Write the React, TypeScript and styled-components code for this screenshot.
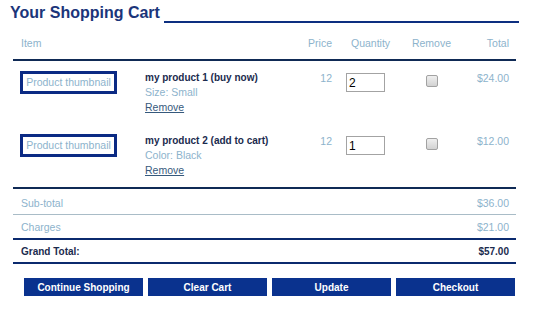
import React from "react";
import styled, { createGlobalStyle } from "styled-components";

const GlobalStyle = createGlobalStyle`
  html, body { margin: 0; padding: 0; background: #ffffff; }
  body { font-family: "Liberation Sans", Arial, sans-serif; }
`;

const NAVY = "#0b2a6e";
const LIGHT = "#8db3cc";
const DARK = "#1b2b4e";

const Page = styled.div`
  padding-top: 3px;
  width: 539px;
`;

const TitleRow = styled.div`
  display: flex;
  align-items: flex-start;
  height: 20px;
  padding-left: 10px;
  width: 509px;
`;

const Title = styled.h1`
  margin: 0;
  font-size: 16px;
  line-height: 20px;
  font-weight: bold;
  color: #1b357a;
  white-space: nowrap;
`;

const TitleRule = styled.div`
  flex: 1;
  height: 2px;
  margin-top: 18px;
  margin-left: 4px;
  background: #0d2f80;
`;

const Table = styled.div`
  margin: 13px 0 0 13px;
  width: 503px;
`;

const cols = "132px 145px 46px 68px 55px 57px";

const HeaderRow = styled.div`
  display: grid;
  grid-template-columns: ${cols};
  padding-bottom: 9px;
  border-bottom: 2px solid #0f2a55;
  font-size: 10.5px;
  line-height: 14px;
  color: ${LIGHT};
`;

const HeadCell = styled.div<{ $align?: string; $pl?: number; $pr?: number }>`
  text-align: ${(p) => p.$align || "left"};
  padding-left: ${(p) => p.$pl || 0}px;
  padding-right: ${(p) => p.$pr || 0}px;
`;

const Items = styled.div`
  border-bottom: 2px solid #0f2a55;
`;

const ItemRow = styled.div`
  display: grid;
  grid-template-columns: ${cols};
  align-items: start;
  box-sizing: border-box;
  height: 63px;
  padding-top: 10px;
  font-size: 10.5px;
  line-height: 14px;
  color: ${LIGHT};
`;

const Cell = styled.div<{ $align?: string; $pl?: number; $pr?: number }>`
  text-align: ${(p) => p.$align || "left"};
  padding-left: ${(p) => p.$pl || 0}px;
  padding-right: ${(p) => p.$pr || 0}px;
`;

const Thumb = styled.span`
  display: inline-block;
  box-sizing: border-box;
  width: 97px;
  height: 23px;
  border: 3px solid #0b2a84;
  font-size: 10.5px;
  line-height: 17px;
  text-align: center;
  color: ${LIGHT};
  white-space: nowrap;
`;

const Name = styled.div`
  font-size: 10px;
  font-weight: bold;
  color: ${DARK};
  white-space: nowrap;
`;

const Option = styled.div`
  color: ${LIGHT};
`;

const RemoveLink = styled.a`
  display: inline-block;
  margin-top: 1px;
  color: #36597c;
  text-decoration: underline;
  cursor: pointer;
`;

const QtyInput = styled.input`
  box-sizing: border-box;
  width: 39px;
  height: 19px;
  margin: 2px 0 0 0;
  padding: 0 2px;
  border: 1px solid #a3a3a3;
  font-family: "Liberation Sans", Arial, sans-serif;
  font-size: 12px;
  color: #000;
  outline: none;
`;

const CheckBox = styled.input`
  appearance: none;
  box-sizing: border-box;
  width: 12px;
  height: 12px;
  margin: 4px 0 0 0;
  border: 1px solid #a2a2a2;
  border-radius: 2px;
  background: linear-gradient(#efefef, #d2d2d2);
`;

const SumRow = styled.div<{ $pt: number; $pb: number; $border: string; $strong?: boolean }>`
  display: flex;
  justify-content: space-between;
  padding: ${(p) => p.$pt}px 7px ${(p) => p.$pb}px 8px;
  border-bottom: ${(p) => p.$border};
  font-size: ${(p) => (p.$strong ? "10px" : "10.5px")};
  font-weight: ${(p) => (p.$strong ? "bold" : "normal")};
  line-height: 14px;
  color: ${(p) => (p.$strong ? DARK : LIGHT)};
`;

const ButtonBar = styled.div`
  display: grid;
  grid-template-columns: repeat(4, 119px);
  gap: 5px;
  margin: 14px 0 0 24px;
`;

const Button = styled.button`
  height: 18px;
  padding: 0;
  border: none;
  background: #0a328e;
  color: #ffffff;
  font-family: "Liberation Sans", Arial, sans-serif;
  font-size: 10px;
  font-weight: bold;
  cursor: pointer;
`;

const items = [
  { name: "my product 1 (buy now)", option: "Size: Small", price: "12", qty: "2", total: "$24.00" },
  { name: "my product 2 (add to cart)", option: "Color: Black", price: "12", qty: "1", total: "$12.00" },
];

export default function App() {
  return (
    <Page>
      <GlobalStyle />
      <TitleRow>
        <Title>Your Shopping Cart</Title>
        <TitleRule />
      </TitleRow>
      <Table>
        <HeaderRow>
          <HeadCell $pl={8}>Item</HeadCell>
          <HeadCell />
          <HeadCell $align="right" $pr={4}>Price</HeadCell>
          <HeadCell $pl={15}>Quantity</HeadCell>
          <HeadCell $align="center">Remove</HeadCell>
          <HeadCell $align="right" $pr={7}>Total</HeadCell>
        </HeaderRow>
        <Items>
          {items.map((it) => (
            <ItemRow key={it.name}>
              <Cell $pl={7}>
                <Thumb>Product thumbnail</Thumb>
              </Cell>
              <Cell>
                <Name>{it.name}</Name>
                <Option>{it.option}</Option>
                <RemoveLink>Remove</RemoveLink>
              </Cell>
              <Cell $align="right" $pr={4}>{it.price}</Cell>
              <Cell $pl={10}>
                <QtyInput defaultValue={it.qty} />
              </Cell>
              <Cell $align="center">
                <CheckBox type="checkbox" />
              </Cell>
              <Cell $align="right" $pr={7}>{it.total}</Cell>
            </ItemRow>
          ))}
        </Items>
        <SumRow $pt={7} $pb={4} $border="1px solid #a9bcc7">
          <span>Sub-total</span>
          <span>$36.00</span>
        </SumRow>
        <SumRow $pt={5} $pb={4} $border={`2px solid ${NAVY}`}>
          <span>Charges</span>
          <span>$21.00</span>
        </SumRow>
        <SumRow $pt={5} $pb={3} $border={`2px solid ${NAVY}`} $strong>
          <span>Grand Total:</span>
          <span>$57.00</span>
        </SumRow>
      </Table>
      <ButtonBar>
        <Button>Continue Shopping</Button>
        <Button>Clear Cart</Button>
        <Button>Update</Button>
        <Button>Checkout</Button>
      </ButtonBar>
    </Page>
  );
}
